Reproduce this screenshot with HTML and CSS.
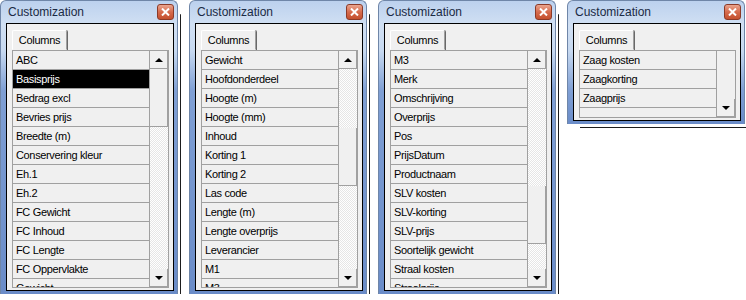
FILE: index.html
```html
<!DOCTYPE html>
<html lang="nl">
<head>
  <meta charset="UTF-8">
  <title>Customization</title>
  <link rel="stylesheet" href="styles.css">
</head>
<body>
  <div class="desk">

    <div class="win">
      <div class="titlebar">
        <span class="title">Customization</span>
        <span class="close"><svg width="9" height="8" viewBox="0 0 9 8"><path d="M1 0.5l7 7M8 0.5l-7 7" stroke="#fff" stroke-width="2"/></svg></span>
      </div>
      <div class="client">
        <div class="tab">Columns</div>
        <div class="list">
          <div class="rows">
            <div class="row">ABC</div>
            <div class="row sel">Basisprijs</div>
            <div class="row">Bedrag excl</div>
            <div class="row">Bevries prijs</div>
            <div class="row">Breedte (m)</div>
            <div class="row">Conservering kleur</div>
            <div class="row">Eh.1</div>
            <div class="row">Eh.2</div>
            <div class="row">FC Gewicht</div>
            <div class="row">FC Inhoud</div>
            <div class="row">FC Lengte</div>
            <div class="row">FC Oppervlakte</div>
            <div class="row">Gewicht</div>
          </div>
          <div class="sbar">
            <div class="btn"><i class="arr up"></i></div>
            <div class="track"><div class="thumb" style="margin-top: 0px"></div></div>
            <div class="btn"><i class="arr down"></i></div>
          </div>
        </div>
      </div>
    </div>

    <div class="win">
      <div class="titlebar">
        <span class="title">Customization</span>
        <span class="close"><svg width="9" height="8" viewBox="0 0 9 8"><path d="M1 0.5l7 7M8 0.5l-7 7" stroke="#fff" stroke-width="2"/></svg></span>
      </div>
      <div class="client">
        <div class="tab">Columns</div>
        <div class="list">
          <div class="rows">
            <div class="row">Gewicht</div>
            <div class="row">Hoofdonderdeel</div>
            <div class="row">Hoogte (m)</div>
            <div class="row">Hoogte (mm)</div>
            <div class="row">Inhoud</div>
            <div class="row">Korting 1</div>
            <div class="row">Korting 2</div>
            <div class="row">Las code</div>
            <div class="row">Lengte (m)</div>
            <div class="row">Lengte overprijs</div>
            <div class="row">Leverancier</div>
            <div class="row">M1</div>
            <div class="row">M3</div>
          </div>
          <div class="sbar">
            <div class="btn"><i class="arr up"></i></div>
            <div class="track"><div class="thumb" style="margin-top: 59px"></div></div>
            <div class="btn"><i class="arr down"></i></div>
          </div>
        </div>
      </div>
    </div>

    <div class="win">
      <div class="titlebar">
        <span class="title">Customization</span>
        <span class="close"><svg width="9" height="8" viewBox="0 0 9 8"><path d="M1 0.5l7 7M8 0.5l-7 7" stroke="#fff" stroke-width="2"/></svg></span>
      </div>
      <div class="client">
        <div class="tab">Columns</div>
        <div class="list">
          <div class="rows">
            <div class="row">M3</div>
            <div class="row">Merk</div>
            <div class="row">Omschrijving</div>
            <div class="row">Overprijs</div>
            <div class="row">Pos</div>
            <div class="row">PrijsDatum</div>
            <div class="row">Productnaam</div>
            <div class="row">SLV kosten</div>
            <div class="row">SLV-korting</div>
            <div class="row">SLV-prijs</div>
            <div class="row">Soortelijk gewicht</div>
            <div class="row">Straal kosten</div>
            <div class="row">Straalprijs</div>
          </div>
          <div class="sbar">
            <div class="btn"><i class="arr up"></i></div>
            <div class="track"><div class="thumb" style="margin-top: 117px"></div></div>
            <div class="btn"><i class="arr down"></i></div>
          </div>
        </div>
      </div>
    </div>

    <div class="win small">
      <div class="titlebar">
        <span class="title">Customization</span>
        <span class="close"><svg width="9" height="8" viewBox="0 0 9 8"><path d="M1 0.5l7 7M8 0.5l-7 7" stroke="#fff" stroke-width="2"/></svg></span>
      </div>
      <div class="client">
        <div class="tab">Columns</div>
        <div class="list">
          <div class="rows">
            <div class="row">Zaag kosten</div>
            <div class="row">Zaagkorting</div>
            <div class="row">Zaagprijs</div>
          </div>
          <div class="sbar plain">
            <div class="track"></div>
            <div class="btn"><i class="arr down"></i></div>
          </div>
        </div>
      </div>
    </div>

  </div>
</body>
</html>
```

FILE: styles.css
```css
body {
  margin: 0;
  background: #fff;
  font-family: "Liberation Sans", Arial, sans-serif;
  color: #000;
}
.desk {
  display: flex;
  gap: 11px;
  align-items: flex-start;
}
.win {
  width: 178px;
  height: 294px;
  box-sizing: border-box;
  padding: 0 3px 3px 5px;
  border: 1px solid #6f86a8;
  border-bottom: 0;
  border-radius: 6px 6px 0 0;
  background: linear-gradient(#bcd1ee 0, #d1e0f3 24px, #c7d9f0 50px, #7f9fd4 90px, #6a8cc8 100%);
  box-shadow: 7px 8px 0 -5px #fff, 8px 9px 0 -5px #1c1c1c;
  display: flex;
  flex-direction: column;
}
.win.small {
  height: 124px;
}
.titlebar {
  flex: none;
  height: 22px;
  display: flex;
  align-items: center;
  justify-content: space-between;
}
.title {
  font-size: 12px;
  color: #1a2a44;
  padding-left: 2px;
}
.close {
  width: 17px;
  height: 16px;
  box-sizing: border-box;
  border: 1px solid #8c3a28;
  border-radius: 3px;
  background: linear-gradient(#eaa58f, #d66b4d 50%, #c4502e);
  display: flex;
  align-items: center;
  justify-content: center;
}
.close svg {
  display: block;
}
.client {
  flex: 1;
  min-height: 0;
  border: 1px solid #000;
  background: #f0f0f0;
  padding: 6px 4px 2px 5px;
  display: flex;
  flex-direction: column;
}
.tab {
  flex: none;
  width: 55px;
  height: 20px;
  box-sizing: border-box;
  border: 1px solid;
  border-color: #fff #a0a0a0 transparent #fff;
  border-radius: 2px 2px 0 0;
  box-shadow: 1px 0 0 #696969;
  font-size: 11px;
  letter-spacing: -0.3px;
  line-height: 18px;
  text-align: center;
}
.list {
  flex: 1;
  min-height: 0;
  display: flex;
  border: 1px solid #a0a0a0;
}
.rows {
  flex: 1;
  overflow: hidden;
}
.row {
  height: 19px;
  box-sizing: border-box;
  border-bottom: 1px solid #a0a0a0;
  padding-left: 3px;
  font-size: 11px;
  letter-spacing: -0.35px;
  line-height: 18px;
  white-space: nowrap;
}
.row.sel {
  background: #000;
  color: #fff;
}
.sbar {
  width: 18px;
  border-left: 1px solid #a0a0a0;
  display: flex;
  flex-direction: column;
  background: repeating-conic-gradient(#fff 0 25%, #e6e6e6 0 50%) 0 0 / 2px 2px;
}
.sbar.plain {
  background: #f0f0f0;
}
.btn {
  flex: none;
  height: 18px;
  box-sizing: border-box;
  background: #f0f0f0;
  border-right: 1px solid #a0a0a0;
  border-bottom: 1px solid #a0a0a0;
  display: flex;
  align-items: center;
  justify-content: center;
}
.track {
  flex: 1;
  min-height: 0;
}
.thumb {
  height: 58px;
  box-sizing: border-box;
  background: #f0f0f0;
  border-right: 1px solid #a0a0a0;
  border-bottom: 1px solid #a0a0a0;
}
.arr {
  width: 0;
  height: 0;
  border-left: 4px solid transparent;
  border-right: 4px solid transparent;
}
.arr.up {
  border-bottom: 4px solid #000;
}
.arr.down {
  border-top: 4px solid #000;
}
```
